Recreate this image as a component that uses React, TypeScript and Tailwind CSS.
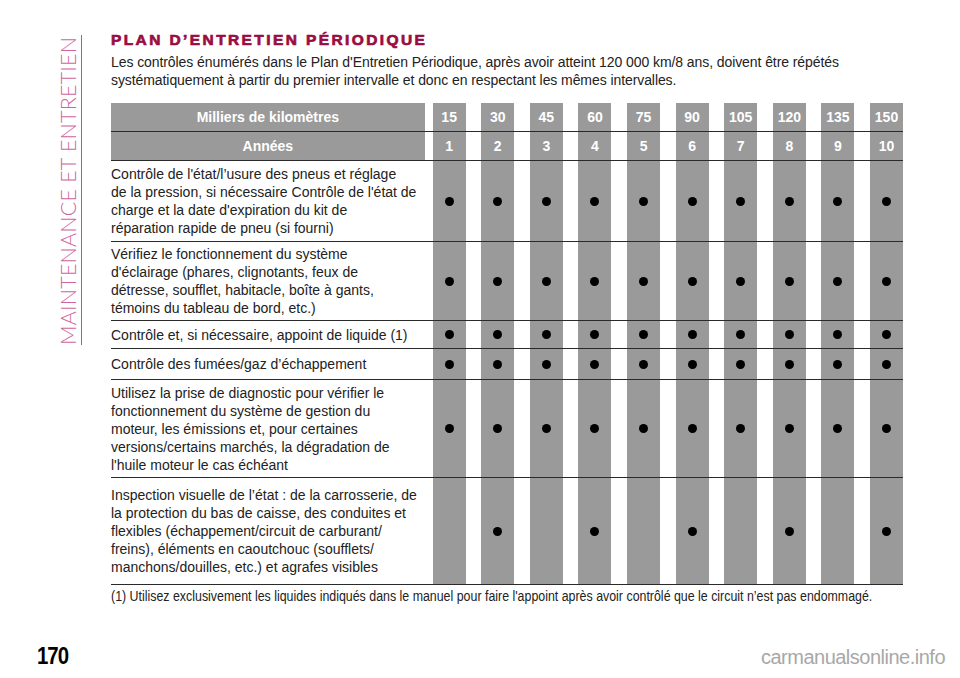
const KM = ["15", "30", "45", "60", "75", "90", "105", "120", "135", "150"];
const YEARS = ["1", "2", "3", "4", "5", "6", "7", "8", "9", "10"];

const ALL = [true, true, true, true, true, true, true, true, true, true];
const EVEN = [false, true, false, true, false, true, false, true, false, true];

// heights include the 1px bottom rule (border-box)
const ROWS = [
  {
    h: "h-[81px]",
    lines: [
      "Contrôle de l'état/l’usure des pneus et réglage",
      "de la pression, si nécessaire Contrôle de l'état de",
      "charge et la date d'expiration du kit de",
      "réparation rapide de pneu (si fourni)",
    ],
    dots: ALL,
  },
  {
    h: "h-[79px]",
    lines: [
      "Vérifiez le fonctionnement du système",
      "d'éclairage (phares, clignotants, feux de",
      "détresse, soufflet, habitacle, boîte à gants,",
      "témoins du tableau de bord, etc.)",
    ],
    dots: ALL,
  },
  {
    h: "h-[28px]",
    lines: ["Contrôle et, si nécessaire, appoint de liquide (1)"],
    dots: ALL,
  },
  {
    h: "h-[31px]",
    lines: ["Contrôle des fumées/gaz d’échappement"],
    dots: ALL,
  },
  {
    h: "h-[98px]",
    lines: [
      "Utilisez la prise de diagnostic pour vérifier le",
      "fonctionnement du système de gestion du",
      "moteur, les émissions et, pour certaines",
      "versions/certains marchés, la dégradation de",
      "l'huile moteur le cas échéant",
    ],
    dots: ALL,
  },
  {
    h: "h-[107px]",
    lines: [
      "Inspection visuelle de l’état : de la carrosserie, de",
      "la protection du bas de caisse, des conduites et",
      "flexibles (échappement/circuit de carburant/",
      "freins), éléments en caoutchouc (soufflets/",
      "manchons/douilles, etc.) et agrafes visibles",
    ],
    dots: EVEN,
  },
];

const HeaderRow = ({ label, values }: { label: string; values: string[] }) => (
  <div className="flex h-[29px] border-b border-[#2a2a2a]">
    <div className="w-[314px] mr-[8px] bg-[#9a9a9a] flex items-center justify-center text-white font-bold text-[14px]">
      {label}
    </div>
    <div className="flex gap-[15.6px]">
      {values.map((v) => (
        <div
          key={v}
          className="w-[33px] bg-[#9a9a9a] flex items-center justify-center text-white font-bold text-[14px]"
        >
          {v}
        </div>
      ))}
    </div>
  </div>
);

export default function App() {
  return (
    <div className="w-[960px] h-[678px] bg-white flex flex-col font-['Liberation_Sans',Arial,sans-serif] text-[#222]">
      <div className="flex flex-1">
        {/* side rail */}
        <div className="w-[111px] shrink-0 pt-[35px] pl-[58px]">
          <div className="flex h-[310px]">
            <div className="[writing-mode:vertical-rl] rotate-180 font-['Lato',sans-serif] font-light text-[21.5px] leading-[20px] text-[#d0649c] tracking-[0.2px] text-left">
              MAINTENANCE ET ENTRETIEN
            </div>
            <div className="w-px bg-[#c2508c] ml-[3px]" />
          </div>
        </div>

        <div className="flex-1 pt-[31px]">
          <h2 className="text-[15.5px] leading-[18px] font-bold tracking-[2.4px] text-[#9a0d41] [-webkit-text-stroke:0.7px_#9a0d41]">
            PLAN D’ENTRETIEN PÉRIODIQUE
          </h2>
          <p className="mt-[5px] text-[14px] leading-[17.5px] tracking-[-0.08px]">
            Les contrôles énumérés dans le Plan d'Entretien Périodique, après avoir atteint 120 000 km/8 ans, doivent être répétés
            <br />
            systématiquement à partir du premier intervalle et donc en respectant les mêmes intervalles.
          </p>

          <div className="mt-[14px] w-[792px]">
            <HeaderRow label="Milliers de kilomètres" values={KM} />
            <HeaderRow label="Années" values={YEARS} />
            {ROWS.map((row, i) => (
              <div key={i} className={`flex border-b border-[#2a2a2a] ${row.h}`}>
                <div className="w-[322px] flex items-center text-[14px] leading-[18px]">
                  <div>
                    {row.lines.map((l) => (
                      <div key={l}>{l}</div>
                    ))}
                  </div>
                </div>
                <div className="flex gap-[15.6px]">
                  {row.dots.map((d, j) => (
                    <div key={j} className="w-[33px] bg-[#9a9a9a] flex items-center justify-center">
                      {d && <div className="w-[9px] h-[9px] rounded-full bg-black" />}
                    </div>
                  ))}
                </div>
              </div>
            ))}
            <p className="mt-[3px] text-[14px] leading-[17px] whitespace-nowrap origin-left scale-x-[0.885]">
              (1) Utilisez exclusivement les liquides indiqués dans le manuel pour faire l'appoint après avoir contrôlé que le circuit n’est pas endommagé.
            </p>
          </div>
        </div>
      </div>

      {/* footer */}
      <div className="flex items-end justify-between pl-[37px] pr-[15px] pb-[9px]">
        <span className="inline-block origin-left scale-x-[0.85] text-[24px] leading-[26px] font-bold tracking-[-1.2px] text-black">
          170
        </span>
        <span className="text-[20px] leading-[24px] text-[#a8a8a8] tracking-[-0.5px]">
          carmanualsonline.info
        </span>
      </div>
    </div>
  );
}
